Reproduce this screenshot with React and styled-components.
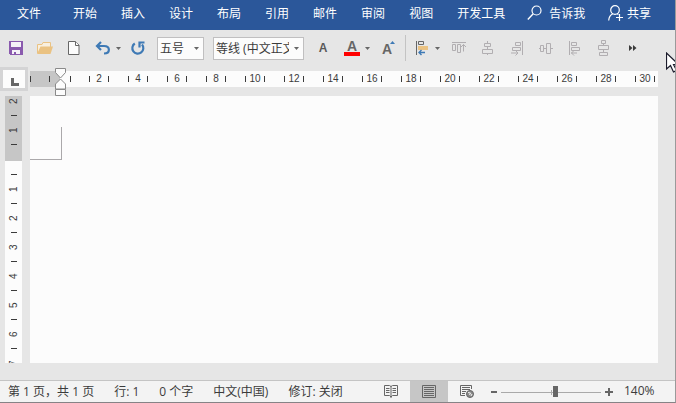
import React, { useState } from "react";
import styled, { createGlobalStyle, css } from "styled-components";

const theme = {
  brand: "#2b579a",
  chrome: "#e6e6e6",
  paper: "#fcfcfc",
  margin: "#c6c6c6",
  status: "#f3f3f3",
  text: "#3b3b3b",
  icon: "#666666",
  disabled: "#b1aeb1",
  blue: "#3f7ab5",
  sand: "#eac282",
  purple: "#8a5aae"
};

const GlobalStyle = createGlobalStyle`
  * {
    box-sizing: border-box;
  }

  body {
    margin: 0;
    font-family: "Open Sans", "Noto Sans CJK SC", sans-serif;
    font-size: 12px;
    color: ${theme.text};
  }

  button,
  select {
    font: inherit;
    color: inherit;
  }

  svg {
    display: block;
    flex: none;
    overflow: visible;
  }
`;

const Window = styled.div`
  position: relative;
  display: flex;
  flex-direction: column;
  height: 100vh;
  overflow: hidden;
  background: ${theme.chrome};
  border-right: 1px solid #9a9a9a;
  border-bottom: 1px solid #868386;
`;

const PlainButton = styled.button`
  display: flex;
  align-items: center;
  justify-content: center;
  padding: 0;
  border: 0;
  background: none;
`;

/* Ribbon tabs */

const Ribbon = styled.header`
  display: flex;
  align-items: center;
  height: 30px;
  padding: 0 24px 4px 0;
  background: ${theme.brand};
  color: #ffffff;
  white-space: nowrap;
`;

const Tabs = styled.nav`
  display: flex;
`;

const Tab = styled.a`
  padding: 0 12px;
  color: inherit;
  text-decoration: none;
`;

const FileTab = styled(Tab)`
  padding: 0 20px 0 17px;
`;

const RibbonButton = styled(PlainButton)`
  gap: ${({ $gap }) => $gap}px;
  margin-left: ${({ $pushRight }) => ($pushRight ? "auto" : "10px")};
`;

/* Quick access toolbar */

const Toolbar = styled.div`
  display: flex;
  align-items: center;
  gap: 1px;
  height: 36px;
  padding-left: 2px;
`;

const IconButton = styled(PlainButton)`
  flex: none;
  width: 28px;
  height: 24px;
`;

const Split = styled.div`
  display: flex;
  padding-left: 3px;
`;

const SplitMain = styled(IconButton)`
  width: 22px;
`;

const SplitArrow = styled(IconButton)`
  width: 9px;
`;

const AlignTools = styled.div`
  display: flex;
  gap: 1px;
  padding-left: 2px;
`;

const Divider = styled.div`
  width: 1px;
  height: 26px;
  margin: 0 1px 0 3px;
  background: #c3c3c3;
`;

const SelectBox = styled.div`
  position: relative;
  flex: none;
  width: ${({ $width }) => $width}px;
  height: 23px;
  margin: 0 4px;

  svg {
    position: absolute;
    top: 10px;
    right: 5px;
    pointer-events: none;
  }
`;

const Select = styled.select`
  appearance: none;
  width: 100%;
  height: 100%;
  padding: 0 14px 0 2px;
  border: 1px solid #c0bfc0;
  border-radius: 0;
  background: ${theme.paper};
  outline: none;
`;

/* Document area */

const Workspace = styled.main`
  flex: 1;
  min-height: 0;
  display: grid;
  grid-template-columns: 30px minmax(0, 1fr);
  grid-template-rows: 24px minmax(0, 1fr);
  row-gap: 5px;
  padding: 1px 17px 17px 0;
`;

const TabSelector = styled(PlainButton)`
  width: 28px;
  padding: 6px 0 0 2px;
  border: 3px solid #d4d4d5;
  background: ${theme.paper};
`;

const rulerText = css`
  font-family: "Liberation Sans", Arial, sans-serif;
  font-size: 10px;
  line-height: 10px;
`;

const Ruler = styled.div`
  ${rulerText}
  position: relative;
  display: flex;
  align-self: start;
  height: 16px;
  margin-top: 4px;
  background: ${theme.paper};
`;

const RulerScale = styled.div`
  display: flex;
  flex: 1;
  min-width: 0;
  overflow: hidden;
`;

const RulerMargin = styled.div`
  display: flex;
  align-items: center;
  flex: none;
  gap: 18px;
  width: 30px;
  background: ${theme.margin};
`;

const RulerLead = styled.div`
  display: flex;
  align-items: center;
  justify-content: center;
  flex: none;
  width: 20px;
`;

const RulerCell = styled.div`
  display: flex;
  align-items: center;
  justify-content: space-between;
  flex: none;
  width: 39px;
  padding: 0 10px 0 9px;
`;

const RulerNumber = styled.span`
  display: flex;
  justify-content: center;
  width: 12px;
`;

const Tick = styled.i`
  flex: none;
  width: 1px;
  height: 6px;
  background: ${theme.text};
`;

const IndentMarker = styled.svg`
  position: absolute;
  top: -3px;
  left: 25px;
`;

const VerticalRuler = styled.div`
  ${rulerText}
  display: flex;
  flex-direction: column;
  width: 17px;
  margin-left: 5px;
  overflow: hidden;
  background: ${theme.paper};
`;

const VerticalMargin = styled.div`
  display: flex;
  flex-direction: column;
  align-items: center;
  justify-content: flex-end;
  flex: none;
  height: 65px;
  padding-bottom: 16px;
  overflow: hidden;
  background: ${theme.margin};
`;

const VerticalBody = styled.div`
  display: flex;
  flex-direction: column;
  align-items: center;
  padding-top: 13px;
`;

const VerticalCell = styled.div`
  display: flex;
  flex-direction: column;
  align-items: center;
  flex: none;
  height: 29px;
`;

const VerticalTick = styled.i`
  flex: none;
  width: 6px;
  height: 1px;
  background: ${theme.text};
`;

const VerticalNumber = styled.span`
  display: flex;
  flex: 1;
  align-items: center;
  justify-content: center;
  writing-mode: vertical-rl;
  transform: rotate(180deg);
`;

const Page = styled.article`
  padding-top: 31px;
  background: ${theme.paper};
`;

const MarginCorner = styled.div`
  width: 32px;
  height: 33px;
  border: solid #aaa8aa;
  border-width: 0 1px 1px 0;
`;

/* Status bar */

const StatusBar = styled.footer`
  display: flex;
  align-items: stretch;
  height: 22px;
  padding-right: 19px;
  border-top: 1px solid #c4c4c4;
  background: ${theme.status};
  white-space: nowrap;
`;

const StatusTexts = styled.div`
  display: flex;
  align-items: center;
  gap: 20px;
  padding: 0 0 2px 8px;
`;

const ViewButtons = styled.div`
  display: flex;
  margin-left: auto;
`;

const ViewButton = styled(PlainButton)`
  width: 38px;
  background: ${({ $active }) => ($active ? theme.margin : "transparent")};
`;

const Zoom = styled.div`
  display: flex;
  align-items: center;
  gap: 4px;
  padding-left: 5px;
`;

const ZoomLevel = styled.span`
  width: 32px;
  margin-left: 7px;
  padding-bottom: 2px;
`;

const ZoomSlider = styled.input`
  appearance: none;
  width: 100px;
  height: 12px;
  margin: 0;
  outline: none;
  background: linear-gradient(#a9a9a9, #a9a9a9) 0 6px / 100% 1px no-repeat,
    linear-gradient(#a9a9a9, #a9a9a9) 50px 4px / 1px 5px no-repeat;

  &::-webkit-slider-thumb {
    appearance: none;
    width: 5px;
    height: 11px;
    background: ${theme.icon};
  }
`;

const Pointer = styled.svg`
  position: absolute;
  top: 52px;
  right: -1px;
  overflow: hidden;
  pointer-events: none;
`;

/* Icons */

const SearchIcon = () => (
  <svg width="15" height="16" viewBox="0 0 15 16" fill="none" stroke="#fff">
    <circle cx="9.5" cy="5.5" r="4.5" strokeWidth="1.2" />
    <path d="M6.2 8.8L.8 14.6" strokeWidth="1.4" />
  </svg>
);

const ShareIcon = () => (
  <svg width="15" height="16" viewBox="0 0 15 16" fill="none" stroke="#fff" strokeWidth="1.2">
    <circle cx="7" cy="5" r="4.3" />
    <path d="M.7 15.5C.9 12 2.5 9.800 4.800 8.700M9.200 8.700l1.200.8" />
    <path d="M11.5 9v7M8 12.5h7" />
  </svg>
);

const SaveIcon = () => (
  <svg width="14" height="14" viewBox="0 0 14 14" shapeRendering="crispEdges">
    <path d="M0 0h14v14H1L0 13z" fill={theme.purple} />
    <path d="M2 1h10v5H2zM3 9h8v4H7v-2H5v2H3z" fill="#f6f2f8" />
  </svg>
);

const FolderIcon = () => (
  <svg width="16" height="14" viewBox="0 0 16 14">
    <path d="M.5 12V3.500H5l1-2h7.500V6" fill="#f8efdf" stroke={theme.sand} />
    <path d="M3.500 5.500H16L13.500 13H0z" fill={theme.sand} />
  </svg>
);

const NewIcon = () => (
  <svg width="12" height="14" viewBox="0 0 12 14" fill={theme.paper} stroke={theme.icon}>
    <path d="M.5.5h7l3.500 3.500v9.500H.5z" />
    <path d="M7.500.5V4.500H11" />
  </svg>
);

const UndoIcon = () => (
  <svg width="16" height="14" viewBox="0 0 16 14" fill="none" stroke={theme.blue} strokeWidth="2.2">
    <path d="M6 1L2 5l4 4" />
    <path d="M2.500 5H9c6.500 0 6.500 7.500 0 7.500" />
  </svg>
);

const RedoIcon = () => (
  <svg width="14" height="14" viewBox="0 0 14 14" fill="none" stroke={theme.blue} strokeWidth="2.2">
    <path d="M3.800 2.500A5.500 5.500 0 1 0 11 3.500" />
    <path d="M13.500 1.500H8.500V6.500" />
  </svg>
);

const ArrowIcon = () => (
  <svg width="5" height="3" viewBox="0 0 5 3" fill={theme.icon}>
    <path d="M0 0h5L2.500 3z" />
  </svg>
);

const letterA = "Liberation Sans, Arial, sans-serif";

const LetterIcon = () => (
  <svg width="16" height="16" viewBox="0 0 16 16">
    <text x="8" y="12" fontFamily={letterA} fontSize="12" fontWeight="bold" fill="#595959" textAnchor="middle">
      A
    </text>
  </svg>
);

const FontColorIcon = () => (
  <svg width="16" height="16" viewBox="0 0 16 16">
    <text x="8" y="11" fontFamily={letterA} fontSize="14" fontWeight="bold" fill={theme.icon} textAnchor="middle">
      A
    </text>
    <path d="M0 12h16v4H0z" fill="#ff0000" />
  </svg>
);

const GrowFontIcon = () => (
  <svg width="14" height="16" viewBox="0 0 14 16">
    <text x="7" y="14" fontFamily={letterA} fontSize="14" fontWeight="bold" fill={theme.icon} textAnchor="middle">
      A
    </text>
    <path d="M10 4h5l-2.500-3z" fill={theme.blue} />
  </svg>
);

const AlignObjectsIcon = () => (
  <svg width="12" height="14" viewBox="0 0 12 14" fill="none">
    <path d="M.5 0v14" stroke={theme.icon} />
    <path d="M2.500.5h5v3h-5z" stroke={theme.icon} />
    <path d="M2 5h10v4H2z" fill={theme.sand} />
    <path d="M3 11.500h6M5.500 9L3 11.500 5.500 14" stroke={theme.blue} strokeWidth="1.400" />
  </svg>
);

const DisabledIcon = ({ width = 14, d }) => (
  <svg width={width} height="14" viewBox={`0 0 ${width} 14`} fill="none" stroke={theme.disabled}>
    <path d={d} />
  </svg>
);

const ALIGN_ICONS = [
  { label: "顶端对齐", d: "M0 1.500h14M.5 3.500h3v6h-3zM5.500 3.500h3v8h-3zM11.500 3.500v7M9 6l2.500-2.500L14 6" },
  { label: "水平居中", width: 12, d: "M5.500 0v2M2.500 2.500h6v3h-6zM5.500 6v2M.5 8.500h10v4H.5zM5.500 13v1" },
  { label: "右对齐", width: 12, d: "M11.500 0v14M4.500 1.500h5v3h-5zM1.500 6.500h8v3h-8zM0 12h7M4.500 9.500L7 12l-2.500 2.500" },
  { label: "垂直居中", d: "M0 7.500h1M1.500 4.500h3v6h-3zM5 7.500h2M7.500 2.500h4v10h-4zM12 7.500h2" },
  { label: "左对齐", width: 12, d: "M.5 0v14M2.500 1.500h5v3h-5zM2.500 6.500h8v3h-8zM2 12h6M5 9.500L2.500 12 5 14.500" },
  { label: "纵向分布", width: 12, d: "M3.500-.5h4v3h-4zM5.500 3v1M.5 4.500h10v4H.5zM5.500 9v2M1.500 11.500h8v3h-8z" }
];

const MoreIcon = () => (
  <svg width="8" height="6" viewBox="0 0 8 6" fill={theme.text}>
    <path d="M0 0l3.500 3L0 6zM4 0l3.500 3L4 6z" />
  </svg>
);

const TabStopIcon = () => (
  <svg width="8" height="8" viewBox="0 0 8 8" fill="none" stroke={theme.icon} strokeWidth="3">
    <path d="M1.500 0v6.500H8" />
  </svg>
);

const ReadIcon = () => (
  <svg width="14" height="13" viewBox="0 0 14 13" fill="none" stroke={theme.icon}>
    <path d="M.5.5h5L7 1.500 8.500.5h5v10h-5L7 12 5.500 10.500h-5zM7 1v12" />
    <path d="M2 3.500h3.500M2 5.500h3.500M2 7.500h3.500M8.500 3.500H12M8.500 5.500H12M8.500 7.500H12" />
  </svg>
);

const PrintIcon = () => (
  <svg width="14" height="13" viewBox="0 0 14 13" fill="none" stroke={theme.icon}>
    <path d="M.5.5h13v12H.5zM2 2.500h10M2 4.500h10M2 6.500h10M2 8.500h10M2 10.500h10" />
  </svg>
);

const WebIcon = () => (
  <svg width="14" height="13" viewBox="0 0 14 13" fill="none" stroke={theme.icon}>
    <path d="M11.500 4V.5H.5v10H5M2 2.500h8M2 4.500h8M2 6.500h4M2 8.500h3" />
    <circle cx="10" cy="9" r="3.500" fill="#8a8a8a" />
    <path d="M8 7.500l2.500.5-1 2M11 11l1-2" stroke={theme.status} />
  </svg>
);

const MinusIcon = () => (
  <svg width="6" height="7" viewBox="0 0 6 7" stroke={theme.icon} strokeWidth="2">
    <path d="M0 4h6" />
  </svg>
);

const PlusIcon = () => (
  <svg width="8" height="8" viewBox="0 0 8 8" stroke={theme.icon} strokeWidth="2">
    <path d="M0 4h8M4 0v8" />
  </svg>
);

const TABS = ["开始", "插入", "设计", "布局", "引用", "邮件", "审阅", "视图", "开发工具"];
const COLUMNS = Array.from({ length: 15 }, (_, i) => (i + 1) * 2);
const ROWS = Array.from({ length: 7 }, (_, i) => i + 1);
const VIEWS = [
  { id: "read", label: "阅读视图", Icon: ReadIcon },
  { id: "print", label: "页面视图", Icon: PrintIcon },
  { id: "web", label: "Web 版式视图", Icon: WebIcon }
];

const SplitButton = ({ label, children }) => (
  <Split>
    <SplitMain aria-label={label}>{children}</SplitMain>
    <SplitArrow aria-label={`${label}选项`}>
      <ArrowIcon />
    </SplitArrow>
  </Split>
);

const QuickAccess = () => (
  <Toolbar>
    <IconButton aria-label="保存">
      <SaveIcon />
    </IconButton>
    <IconButton aria-label="打开">
      <FolderIcon />
    </IconButton>
    <IconButton aria-label="新建">
      <NewIcon />
    </IconButton>
    <SplitButton label="撤消">
      <UndoIcon />
    </SplitButton>
    <IconButton aria-label="重复">
      <RedoIcon />
    </IconButton>
    <SelectBox $width={47}>
      <Select aria-label="字号">
        <option>五号</option>
      </Select>
      <ArrowIcon />
    </SelectBox>
    <SelectBox $width={91}>
      <Select aria-label="字体">
        <option>等线 (中文正文)</option>
      </Select>
      <ArrowIcon />
    </SelectBox>
    <IconButton aria-label="字符格式">
      <LetterIcon />
    </IconButton>
    <SplitButton label="字体颜色">
      <FontColorIcon />
    </SplitButton>
    <IconButton aria-label="增大字号">
      <GrowFontIcon />
    </IconButton>
    <Divider />
    <SplitButton label="对齐">
      <AlignObjectsIcon />
    </SplitButton>
    <AlignTools>
      {ALIGN_ICONS.map(({ label, ...icon }) => (
        <IconButton key={label} aria-label={label} disabled>
          <DisabledIcon {...icon} />
        </IconButton>
      ))}
      <IconButton aria-label="其他命令">
        <MoreIcon />
      </IconButton>
    </AlignTools>
  </Toolbar>
);

const HorizontalRuler = () => (
  <Ruler>
    <RulerScale>
      <RulerMargin>
        <Tick />
        <Tick />
      </RulerMargin>
      <RulerLead>
        <Tick />
      </RulerLead>
      {COLUMNS.map(n => (
        <RulerCell key={n}>
          <Tick />
          <RulerNumber>{n}</RulerNumber>
          <Tick />
        </RulerCell>
      ))}
    </RulerScale>
    <IndentMarker width="11" height="28" viewBox="0 0 11 28" fill={theme.paper} stroke="#8a8a8a">
      <path d="M.5.5h10v4l-5 5.500-5-5.500z" />
      <path d="M5.500 11l5 5v5H.5v-5z" />
      <path d="M.5 21.500h10v6H.5z" />
    </IndentMarker>
  </Ruler>
);

const SideRuler = () => (
  <VerticalRuler>
    <VerticalMargin>
      {[2, 1].map(n => (
        <VerticalCell key={n}>
          <VerticalNumber>{n}</VerticalNumber>
          <VerticalTick />
        </VerticalCell>
      ))}
    </VerticalMargin>
    <VerticalBody>
      {ROWS.map(n => (
        <VerticalCell key={n}>
          <VerticalTick />
          <VerticalNumber>{n}</VerticalNumber>
        </VerticalCell>
      ))}
    </VerticalBody>
  </VerticalRuler>
);

const App = () => {
  const [view, setView] = useState("print");
  const [zoom, setZoom] = useState(55);

  return (
    <Window>
      <GlobalStyle />
      <Ribbon>
        <Tabs>
          <FileTab href="#file">文件</FileTab>
          {TABS.map(tab => (
            <Tab key={tab} href={`#${tab}`}>
              {tab}
            </Tab>
          ))}
        </Tabs>
        <RibbonButton $gap={7}>
          <SearchIcon />
          告诉我
        </RibbonButton>
        <RibbonButton $gap={4} $pushRight>
          <ShareIcon />
          共享
        </RibbonButton>
      </Ribbon>
      <QuickAccess />
      <Workspace>
        <TabSelector aria-label="制表符">
          <TabStopIcon />
        </TabSelector>
        <HorizontalRuler />
        <SideRuler />
        <Page>
          <MarginCorner />
        </Page>
      </Workspace>
      <StatusBar>
        <StatusTexts>
          <span>第 1 页，共 1 页</span>
          <span>行: 1</span>
          <span>0 个字</span>
          <span>中文(中国)</span>
          <span>修订: 关闭</span>
        </StatusTexts>
        <ViewButtons>
          {VIEWS.map(({ id, label, Icon }) => (
            <ViewButton key={id} aria-label={label} $active={view === id} onClick={() => setView(id)}>
              <Icon />
            </ViewButton>
          ))}
        </ViewButtons>
        <Zoom>
          <PlainButton aria-label="缩小" onClick={() => setZoom(zoom - 5)}>
            <MinusIcon />
          </PlainButton>
          <ZoomSlider
            type="range"
            min="0"
            max="100"
            value={zoom}
            aria-label="缩放"
            onChange={event => setZoom(Number(event.target.value))}
          />
          <PlainButton aria-label="放大" onClick={() => setZoom(zoom + 5)}>
            <PlusIcon />
          </PlainButton>
          <ZoomLevel>140%</ZoomLevel>
        </Zoom>
      </StatusBar>
      <Pointer width="10" height="22" viewBox="0 0 10 22">
        <path d="M.5 1v16l4-3.500 3 6.500 3-1.500-3-6h5z" fill="#fff" stroke="#1b1b2b" strokeWidth="1.200" />
      </Pointer>
    </Window>
  );
};

export default App;
